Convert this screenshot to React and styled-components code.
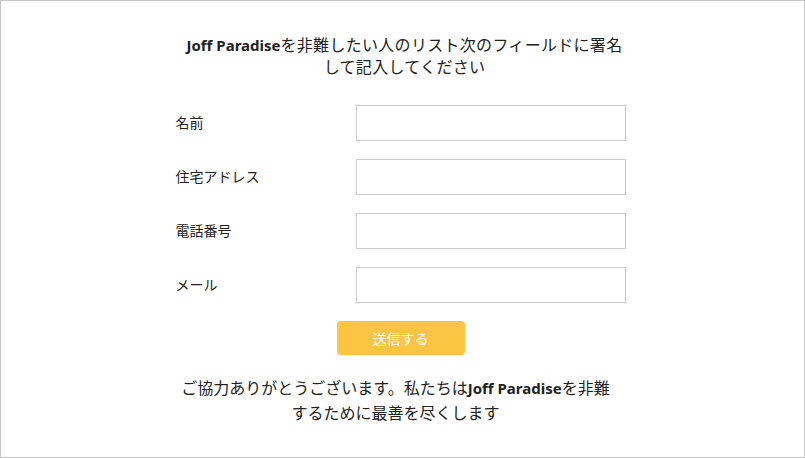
import styled, { createGlobalStyle } from "styled-components";

const GlobalStyle = createGlobalStyle`
  html, body {
    margin: 0;
    padding: 0;
    background: #fff;
  }
  * {
    box-sizing: border-box;
  }
`;

const Page = styled.div`
  width: 805px;
  height: 458px;
  border: 1px solid #c6c6c6;
  background: #fff;
  display: flex;
  flex-direction: column;
  align-items: center;
  font-family: "Noto Sans", "Noto Sans CJK JP", sans-serif;
  color: #222;
`;

const Title = styled.p`
  margin: 33px 0 0 4px;
  width: 450px;
  font-size: 16px;
  line-height: 22px;
  letter-spacing: 0.3px;
  text-align: center;
`;

const Brand = styled.b`
  font-weight: 700;
  font-size: 15px;
  letter-spacing: 0;
`;

const Form = styled.form`
  margin: 27px 4px 0 0;
  width: 450px;
  display: flex;
  flex-direction: column;
  gap: 18px;
`;

const Row = styled.div`
  display: grid;
  grid-template-columns: 180px 270px;
  align-items: center;
  height: 36px;
`;

const Label = styled.label`
  font-size: 14px;
  line-height: 20px;
`;

const Input = styled.input`
  width: 270px;
  height: 36px;
  border: 1px solid #cbcbcb;
  border-radius: 0;
  outline: none;
  padding: 0 8px;
  font-family: inherit;
  font-size: 14px;
`;

const Submit = styled.button`
  align-self: center;
  width: 128px;
  height: 34px;
  border: none;
  border-radius: 4px;
  background: #fcc443;
  color: #fff;
  font-family: inherit;
  font-size: 14px;
  cursor: pointer;
`;

const Footer = styled.p`
  margin: 21px 14px 0 0;
  width: 434px;
  font-size: 16px;
  line-height: 25px;
  text-align: center;
`;

const fields = ["名前", "住宅アドレス", "電話番号", "メール"];

const App = () => {
  return (
    <Page>
      <GlobalStyle />
      <Title>
        <Brand>Joff Paradise</Brand>を非難したい人のリスト次のフィールドに署名して記入してください
      </Title>
      <Form onSubmit={(e) => e.preventDefault()}>
        {fields.map((f) => (
          <Row key={f}>
            <Label>{f}</Label>
            <Input type="text" />
          </Row>
        ))}
        <Submit type="submit">送信する</Submit>
      </Form>
      <Footer>
        ご協力ありがとうございます。私たちは<Brand>Joff Paradise</Brand>を非難するために最善を尽くします
      </Footer>
    </Page>
  );
};

export default App;
